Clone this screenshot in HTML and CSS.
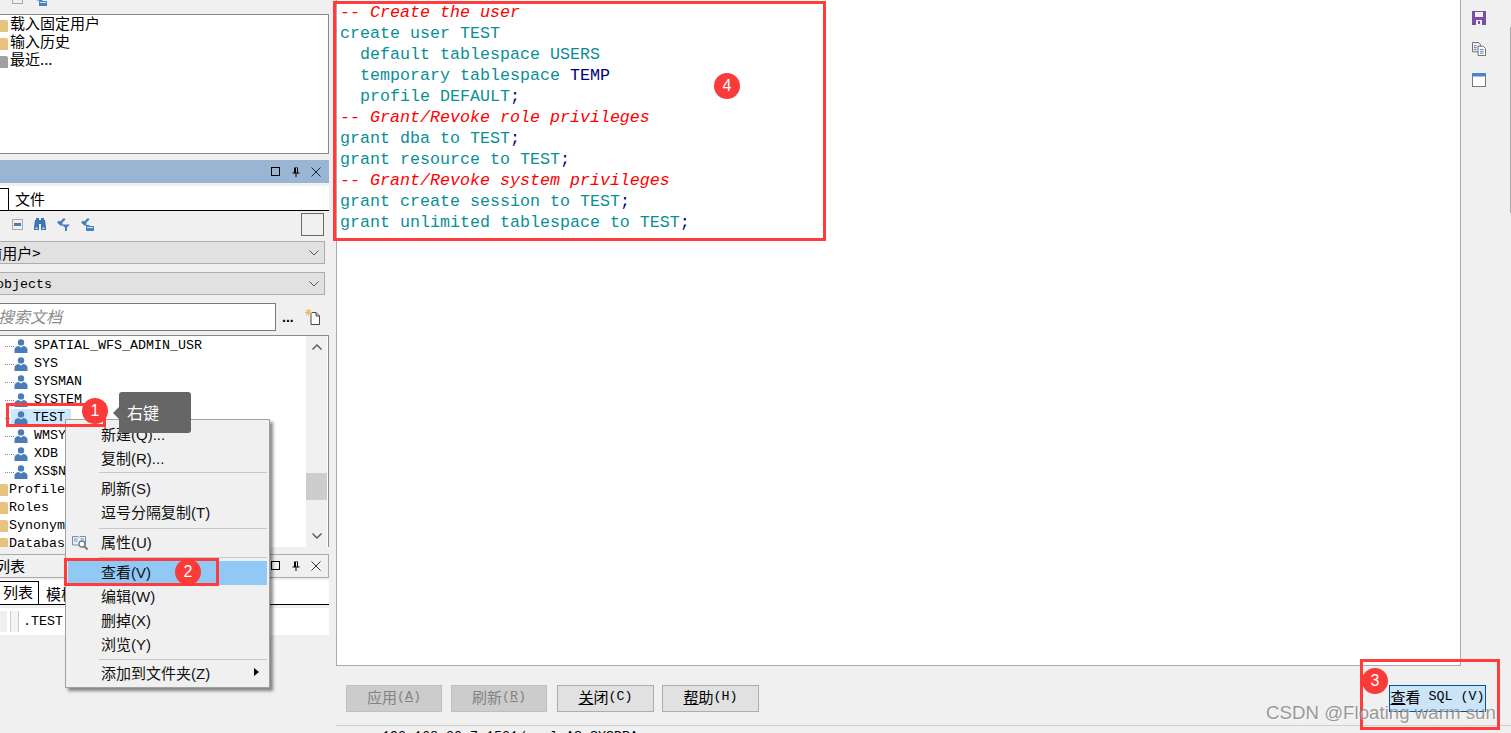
FILE: index.html
```html
<!DOCTYPE html>
<html lang="zh-CN">
<head>
<meta charset="utf-8">
<title>Create user</title>
<link rel="stylesheet" href="styles.css">
</head>
<body>
<svg class="defs" width="0" height="0" aria-hidden="true">
  <defs>
    <symbol id="user" viewBox="0 0 14 14">
      <circle cx="7" cy="3.4" r="3.2" fill="#4a7db8"/>
      <path d="M.5 14V10.500C.5 8.200 3 7 4.500 7L7 8.600 9.500 7C11 7 13.500 8.200 13.500 10.500V14Z" fill="#4a7db8"/>
    </symbol>
    <symbol id="key" viewBox="0 0 13 13">
      <path d="M0 4.500 2 2.500 3 3.500 7 0 8.500 1.500 5 5 6 6 4 8Z" fill="#4a7db8"/>
    </symbol>
    <symbol id="keyfolder" viewBox="0 0 13 13">
      <path d="M0 4.500 2 2.500 3 3.500 7 0 8.500 1.500 5 5 6 6 4 8Z" fill="#4a7db8"/>
      <path d="M5 7H8L9 8H13V13H5Z" fill="#4a84c4"/>
      <path d="M6 9H12V10H6Z" fill="#cfe0f2"/>
    </symbol>
    <symbol id="minusbox" viewBox="0 0 11 11">
      <rect x=".5" y=".5" width="10" height="10" fill="#f0f0f0" stroke="#a9a9a9"/>
      <rect x="2" y="4" width="7" height="3" fill="#4a7db8"/>
    </symbol>
  </defs>
</svg>
<div class="app">
  <aside class="left">
    <div class="toptools">
      <svg class="ic-11 first"><use href="#minusbox"/></svg>
      <svg class="ic-13"><use href="#keyfolder"/></svg>
    </div>
    <div class="listbox">
      <div class="lrow"><i class="lfolder"></i>载入固定用户</div>
      <div class="lrow"><i class="lfolder"></i>输入历史</div>
      <div class="lrow"><i class="lfolder grey"></i>最近...</div>
    </div>
    <div class="titlebar">
      <span class="wbtns">
        <svg viewBox="0 0 10 10"><rect x=".5" y=".5" width="8" height="8" fill="none" stroke="#000"/></svg>
        <svg viewBox="0 0 10 10"><path d="M3 .5H7V5.500H8.500V6.500H5.500V10H4.500V6.500H1.500V5.500H3ZM6 1H5V5.500H6Z" fill="#000"/></svg>
        <svg viewBox="0 0 10 10"><path d="M.5.5 9.500 9.500M9.500.5 .5 9.500" stroke="#000" fill="none" stroke-width=".8"/></svg>
      </span>
    </div>
    <div class="tabs">
      <span class="tab first-tab"></span>
      <span class="tablabel">文件</span>
    </div>
    <div class="tools">
      <svg class="ic-11 first"><use href="#minusbox"/></svg>
      <svg class="ic-12" viewBox="0 0 12 12"><path d="M1 2H2V0H5V2H7V0H10V2H11L12 9V12H7V6H5V12H0V9Z" fill="#3f75b5"/><path d="M1.500 9.500H3.500V11H1.500ZM8.500 9.500H10.500V11H8.500Z" fill="#dce7f3"/></svg>
      <svg class="ic-13" viewBox="0 0 13 13"><use href="#key"/><path d="M4 6.500H13L10 9.500V13H8V9.500Z" fill="#4a7db8"/></svg>
      <svg class="ic-13"><use href="#keyfolder"/></svg>
      <span class="sqbtn"></span>
    </div>
    <div class="select"><span class="sel-user">&lt;当前用户&gt;</span><svg viewBox="0 0 10 6"><path d="M.5.5 5 5 9.500.5" fill="none" stroke="#555"/></svg></div>
    <div class="select"><span class="sel-obj">All objects</span><svg viewBox="0 0 10 6"><path d="M.5.5 5 5 9.500.5" fill="none" stroke="#555"/></svg></div>
    <div class="searchrow">
      <div class="search">搜索文档</div>
      <span class="dots">...</span>
      <svg class="newdoc" viewBox="0 0 16 16"><path d="M6 3.500H11L14.500 7V15.500H6Z" fill="#fff" stroke="#444"/><path d="M11 3.500V7H14.500" fill="none" stroke="#444"/><path d="M3.500 0V7M0 3.500H7M1 1 6 6M6 1 1 6" stroke="#eebc6e" stroke-width="1.100"/></svg>
    </div>
    <div class="tree">
      <div class="rows">
        <div class="row user"><i class="dash"></i><svg><use href="#user"/></svg><span>SPATIAL_WFS_ADMIN_USR</span></div>
        <div class="row user"><i class="dash"></i><svg><use href="#user"/></svg><span>SYS</span></div>
        <div class="row user"><i class="dash"></i><svg><use href="#user"/></svg><span>SYSMAN</span></div>
        <div class="row user"><i class="dash"></i><svg><use href="#user"/></svg><span>SYSTEM</span></div>
        <div class="row user"><i class="dash"></i><div class="sel"><svg><use href="#user"/></svg><span>TEST</span></div></div>
        <div class="row user"><i class="dash"></i><svg><use href="#user"/></svg><span>WMSYS</span></div>
        <div class="row user"><i class="dash"></i><svg><use href="#user"/></svg><span>XDB</span></div>
        <div class="row user"><i class="dash"></i><svg><use href="#user"/></svg><span>XS$NULL</span></div>
        <div class="row fold"><i class="tfolder"></i><span>Profiles</span></div>
        <div class="row fold"><i class="tfolder"></i><span>Roles</span></div>
        <div class="row fold"><i class="tfolder"></i><span>Synonyms</span></div>
        <div class="row fold"><i class="tfolder"></i><span>Database links</span></div>
      </div>
      <div class="scrollbar">
        <svg viewBox="0 0 10 6"><path d="M.5 5.500 5 1 9.500 5.500" fill="none" stroke="#555" stroke-width="1.400"/></svg>
        <span class="thumb"></span>
        <svg viewBox="0 0 10 6"><path d="M.5.5 5 5 9.500.5" fill="none" stroke="#555" stroke-width="1.400"/></svg>
      </div>
    </div>
    <div class="titlebar2">
      <span class="t2label">列表</span>
      <span class="wbtns">
        <svg viewBox="0 0 10 10"><rect x=".5" y=".5" width="8" height="8" fill="none" stroke="#000"/></svg>
        <svg viewBox="0 0 10 10"><path d="M3 .5H7V5.500H8.500V6.500H5.500V10H4.500V6.500H1.500V5.500H3ZM6 1H5V5.500H6Z" fill="#000"/></svg>
        <svg viewBox="0 0 10 10"><path d="M.5.5 9.500 9.500M9.500.5 .5 9.500" stroke="#000" fill="none" stroke-width=".8"/></svg>
      </span>
    </div>
    <div class="tabs2">
      <span class="tab2">列表</span>
      <span class="tablabel2">模板</span>
    </div>
    <div class="winrow">
      <i class="cell-a"></i><i class="cell-b"></i><span>.TEST</span>
    </div>
  </aside>

  <main class="main">
    <div class="top">
      <pre class="editor"><em>-- Create the user</em>
create user TEST
  default tablespace USERS
  temporary tablespace <b>TEMP</b>
  profile DEFAULT<b>;</b>
<em>-- Grant/Revoke role privileges</em>
grant dba to TEST<b>;</b>
grant resource to TEST<b>;</b>
<em>-- Grant/Revoke system privileges</em>
grant create session to TEST<b>;</b>
grant unlimited tablespace to TEST<b>;</b></pre>
      <div class="side">
        <svg viewBox="0 0 14 14"><path d="M0 0H14V14H0Z" fill="#7b4ea6"/><path d="M3 1H11V6H3Z" fill="#f3eef8"/><path d="M4 9H10V14H4Z" fill="#f3eef8"/><path d="M6 10H8V13H6Z" fill="#7b4ea6"/></svg>
        <svg viewBox="0 0 15 15"><path d="M.5.5H7L9 2.500V10.500H.5Z" fill="#f0f0f0" stroke="#666"/><path d="M6.500 4.500H12L14.500 7V14.500H6.500Z" fill="#fff" stroke="#666"/><path d="M2 4H5M2 6H5M2 8H5M8.500 8H12.500M8.500 10H12.500M8.500 12H12.500" stroke="#4a84c4"/></svg>
        <svg viewBox="0 0 14 14"><rect x=".5" y=".5" width="13" height="13" fill="#fff" stroke="#777"/><rect width="14" height="3.500" fill="#4a84c4"/></svg>
        <i class="sidebar-line"></i>
      </div>
    </div>
    <div class="actions">
      <button class="btn off"><span class="cjk">应用</span><span class="mono">(<u>A</u>)</span></button>
      <button class="btn off"><span class="cjk">刷新</span><span class="mono">(<u>R</u>)</span></button>
      <button class="btn wide close"><span class="cjk"><u>关</u>闭</span><span class="mono">(C)</span></button>
      <button class="btn wide help"><span class="cjk"><u>帮</u>助</span><span class="mono">(H)</span></button>
      <button class="btn sql"><span class="cjk"><u>查</u>看</span><span class="mono"> SQL (V)</span></button>
    </div>
    <div class="status">192.168.30.7:1521/orcl AS SYSDBA</div>
  </main>
</div>

<nav class="menu">
  <div class="mi">新建(Q)...</div>
  <div class="mi">复制(R)...</div>
  <div class="sep sep-a"></div>
  <div class="mi">刷新(S)</div>
  <div class="mi">逗号分隔复制(T)</div>
  <div class="sep sep-b"></div>
  <div class="mi"><svg class="mi-ic" viewBox="0 0 16 15"><path d="M.5 1.500H6L7 2.500 8 1.500H13.500V10H.5Z" fill="#eef3f9" stroke="#6a8fb8"/><path d="M2 4H5.500M2 6H5.500M8.500 4H12" stroke="#6a8fb8"/><circle cx="10" cy="9" r="3" fill="#fff" stroke="#777" stroke-width="1.300"/><path d="M12 11 15.500 14.500" stroke="#777" stroke-width="2"/></svg>属性(U)</div>
  <div class="sep"></div>
  <div class="mi on">查看(V)</div>
  <div class="mi">编辑(W)</div>
  <div class="mi">删掉(X)</div>
  <div class="mi">浏览(Y)</div>
  <div class="sep sep-c"></div>
  <div class="mi">添加到文件夹(Z)<i class="arrow"></i></div>
</nav>

<div class="tip">右键</div>
<div class="mark m1"></div>
<div class="mark m2"></div>
<div class="mark m3"></div>
<div class="mark m4"></div>
<div class="num n1">1</div>
<div class="num n2">2</div>
<div class="num n3">3</div>
<div class="num n4">4</div>
<div class="watermark">CSDN @Floating warm sun</div>
</body>
</html>
```
FILE: styles.css
```css
* { box-sizing: border-box; }
html, body { margin: 0; height: 100%; }
body {
  background: #f0f0f0;
  overflow: hidden;
  position: relative;
  width: 1511px;
  height: 733px;
  font-family: "Liberation Sans", "Noto Sans CJK SC", sans-serif;
  color: #000;
}
.defs { position: absolute; }
svg { display: block; flex: none; }
i { display: block; flex: none; }

.app { display: flex; height: 733px; }
.left { width: 336px; flex: none; overflow: hidden; }
.main { flex: 1; min-width: 0; display: flex; flex-direction: column; }

/* left column */
.toptools { height: 14px; display: flex; align-items: flex-start; overflow: hidden; gap: 11px; padding-left: 12px; }
.toptools svg { margin-top: -7px; }
.ic-11 { width: 11px; height: 11px; }
.ic-12 { width: 12px; height: 12px; }
.ic-13 { width: 13px; height: 13px; }

.listbox {
  width: 329px; height: 140px;
  background: #fff;
  border: 1px solid #8a8a8a; border-left: 0;
}
.lrow {
  display: flex; align-items: center; gap: 2px;
  height: 18px; padding-bottom: 3px;
  font: 15px/15px "Noto Sans CJK SC", sans-serif;
}
.lfolder { width: 8px; height: 12px; margin-top: 7px; background: #e8c27f; border-radius: 0 2px 0 0; }
.lfolder.grey { background: #a0a0a0; }

.titlebar {
  width: 329px; height: 23px; margin-top: 6px;
  background: #9ab5d3;
  display: flex; justify-content: flex-end; align-items: center;
}
.wbtns { display: flex; gap: 10px; padding-right: 8px; }
.wbtns svg { width: 10px; height: 10px; }

.tabs {
  width: 329px; height: 25px; margin-top: 3px;
  background: #fff;
  border-bottom: 1px solid #000;
  display: flex; align-items: flex-end;
}
.tab { width: 9px; height: 22px; border: 1px solid #000; border-left: 0; border-bottom: 0; }
.tablabel { font: 15px/22px "Noto Sans CJK SC", sans-serif; padding-left: 6px; }

.tools { height: 30px; width: 324px; display: flex; align-items: center; gap: 11px; padding: 0 0 4px 12px; }
.tools .ic-13 { margin-left: 0; }
.sqbtn { width: 23px; height: 23px; margin-left: auto; border: 1px solid #6a6a6a; background: #f0f0f0; }

.select {
  width: 325px; height: 23px; margin-bottom: 8px;
  background: #e1e1e1; border: 1px solid #adadad; border-left: 0;
  display: flex; align-items: center; justify-content: space-between;
  padding-right: 5px; overflow: hidden;
  white-space: nowrap;
}
.select svg { width: 10px; height: 6px; }
.sel-user { font: 15px/21px "Noto Sans CJK SC", sans-serif; margin-left: -36px; }
.sel-obj { font: 13.33px/21px "Liberation Mono", monospace; margin-left: -36px; padding-top: 1px; }

.searchrow { display: flex; align-items: center; height: 28px; margin-bottom: 4px; }
.search {
  width: 276px; height: 28px;
  background: #fff; border: 1px solid #7a7a7a; border-left: 0;
  font: italic 16px/24px "Noto Sans CJK SC", sans-serif; color: #8c8c8c;
  text-indent: -2px;
  overflow: hidden;
}
.dots { width: 11px; margin-left: 6px; font: bold 14px/26px "Liberation Sans", sans-serif; }
.newdoc { width: 16px; height: 16px; margin-left: 12px; }

.tree {
  width: 329px; height: 212px;
  background: #fff;
  border: 1px solid #8a8a8a; border-left: 0; border-bottom: 0;
  display: flex; overflow: hidden;
}
.rows { flex: 1; padding-top: 1px; min-width: 0; }
.row {
  height: 18px; display: flex; align-items: center;
  font: 13.33px/18px "Liberation Mono", monospace;
  white-space: nowrap;
}
.row.user svg { width: 14px; height: 14px; }
.row.user span { margin-left: 5px; }
.row.user > svg { margin-left: 0; margin-right: 1px; }
.dash { width: 9px; margin-left: 5px; height: 1px; border-top: 1px dotted #888; }
.sel { display: flex; align-items: center; height: 18px; width: 60px; margin-left: -3px; padding-left: 3px; background: #cce8ff; }
.sel span { margin-left: 6px; }
.tfolder { width: 8px; height: 12px; background: #e8c27f; border-radius: 0 2px 0 0; }
.row.fold span { margin-left: 1px; }

.scrollbar {
  width: 21px; margin-right: 1px;
  background: #f0f0f0;
  position: relative;
  display: flex; flex-direction: column; align-items: center;
  padding-top: 8px;
}
.scrollbar svg { width: 10px; height: 6px; }
.thumb { width: 100%; height: 27px; background: #cdcdcd; margin: 123px 0 33px; }

.titlebar2 {
  width: 329px; height: 24px; margin-top: 7px;
  border: 1px solid #aaa; border-left: 0;
  display: flex; justify-content: space-between; align-items: center;
  font: 15px/22px "Noto Sans CJK SC", sans-serif;
}
.t2label { margin-left: -5px; }
.titlebar2 .wbtns { padding-right: 7px; }
.tabs2 {
  width: 329px; height: 25px; margin-top: 2px;
  background: #fff;
  border-bottom: 1px solid #000;
  display: flex; align-items: flex-end;
  font: 15px/20px "Noto Sans CJK SC", sans-serif;
}
.tab2 { width: 39px; height: 23px; padding-left: 3px; border: 1px solid #000; border-left: 0; border-bottom: 0; }
.tablabel2 { padding-left: 7px; }
.winrow {
  width: 329px; height: 27px; margin-top: 3px;
  background: #fff;
  display: flex; align-items: center;
  font: 13.33px/29px "Liberation Mono", monospace;
}
.cell-a { width: 7px; height: 21px; background: #efefef; }
.cell-b { width: 9px; height: 21px; margin-left: 3px; background: #f4f4f4; border: 1px solid #ccc; border-width: 0 1px 0 1px; }
.winrow span { margin-left: 4px; }

/* main */
.top { display: flex; height: 666px; }
.editor {
  flex: 1; min-width: 0; margin: 0;
  background: #fff;
  border: 1px solid #aaa; border-top: 0;
  padding: 2px 0 0 3px;
  font: 16.67px/21px "Liberation Mono", monospace;
  color: #0a8f96;
}
.editor em { color: #ff0000; font-style: italic; }
.editor b { color: #000080; font-weight: normal; }
.side {
  width: 50px; flex: none; position: relative;
  display: flex; flex-direction: column; gap: 17px;
  padding: 11px 0 0 11px;
}
.side svg { width: 14px; height: 14px; }
.sidebar-line { position: absolute; right: 0; top: 27px; height: 186px; width: 1px; background: #a8a8a8; }

.actions { height: 59px; padding: 19px 25px 0 10px; display: flex; align-items: flex-start; gap: 9px; }
.btn {
  width: 96px; height: 27px; padding: 0 0 3px;
  background: #e1e1e1; border: 1px solid #adadad;
  display: flex; align-items: center; justify-content: center;
  color: #000;
  white-space: pre;
}
.btn.wide { width: 97px; }
.btn.close { margin-left: 1px; }
.btn.help { margin-left: -1px; }
.btn.off { background: #cccccc; border-color: #bfbfbf; color: #838383; }
.btn .cjk { font: 15px/20px "Noto Sans CJK SC", sans-serif; }
.btn .mono { font: 13.33px/20px "Liberation Mono", monospace; }
.btn.sql { width: 97px; margin-left: auto; background: #cce4f7; border-color: #005499; }
.status {
  flex: 1; border-top: 1px solid #d0d0d0;
  padding: 3px 0 0 46px;
  font: 13.33px/16px "Liberation Mono", monospace;
  overflow: hidden;
}

/* context menu */
.menu {
  position: absolute; left: 65px; top: 419px;
  width: 205px; height: 269px;
  background: #f0f0f0;
  border: 1px solid #a0a0a0;
  box-shadow: 3px 3px 3px rgba(0,0,0,.45);
  padding: 3px 2px 0;
}
.mi {
  position: relative;
  height: 24px; padding-left: 33px;
  font: 15px/24px "Liberation Sans", "Noto Sans CJK SC", sans-serif;
  color: #111;
}
.mi.on { background: #90c8f6; }
.mi-ic { position: absolute; left: 4px; top: 4px; width: 16px; height: 15px; }
.arrow {
  position: absolute; right: 8px; top: 6px;
  border-left: 5px solid #000; border-top: 4px solid transparent; border-bottom: 4px solid transparent;
}
.sep { height: 1px; margin: 2px 0 3px 31px; background: #c8c8c8; }
.sep-a { margin-top: 1px; margin-bottom: 4px; }
.sep-b { margin-top: 3px; margin-bottom: 2px; }
.sep-c { margin-bottom: 2px; }

/* annotations */
.mark { position: absolute; border: 3px solid #ff3b3b; }
.m1 { left: 6px; top: 403px; width: 100px; height: 24px; }
.m2 { left: 64px; top: 558px; width: 155px; height: 28px; }
.m3 { left: 1360px; top: 659px; width: 140px; height: 71px; }
.m4 { left: 333px; top: 1px; width: 493px; height: 240px; }
.num {
  position: absolute; width: 26px; height: 26px; border-radius: 50%;
  background: #fb3a3a; color: #fff;
  font: 16px/26px "Liberation Sans", sans-serif; text-align: center;
}
.n1 { left: 82px; top: 398px; }
.n2 { left: 175px; top: 559px; }
.n3 { left: 1362px; top: 668px; }
.n4 { left: 714px; top: 73px; }
.tip {
  position: absolute; left: 119px; top: 392px; width: 72px; height: 41px;
  background: #666; border-radius: 3px; color: #fff;
  font: 16px/41px "Noto Sans CJK SC", sans-serif; padding-left: 8px;
}
.tip::before {
  content: ""; position: absolute; left: -6px; top: 15px;
  border-right: 6px solid #666; border-top: 6px solid transparent; border-bottom: 6px solid transparent;
}
.watermark {
  position: absolute; left: 1266px; top: 702px;
  font: 18.7px/22px "Liberation Sans", sans-serif;
  color: rgba(120,120,120,.75);
  text-shadow: 1px 1px 1px rgba(255,255,255,.7);
  white-space: nowrap;
}
```
